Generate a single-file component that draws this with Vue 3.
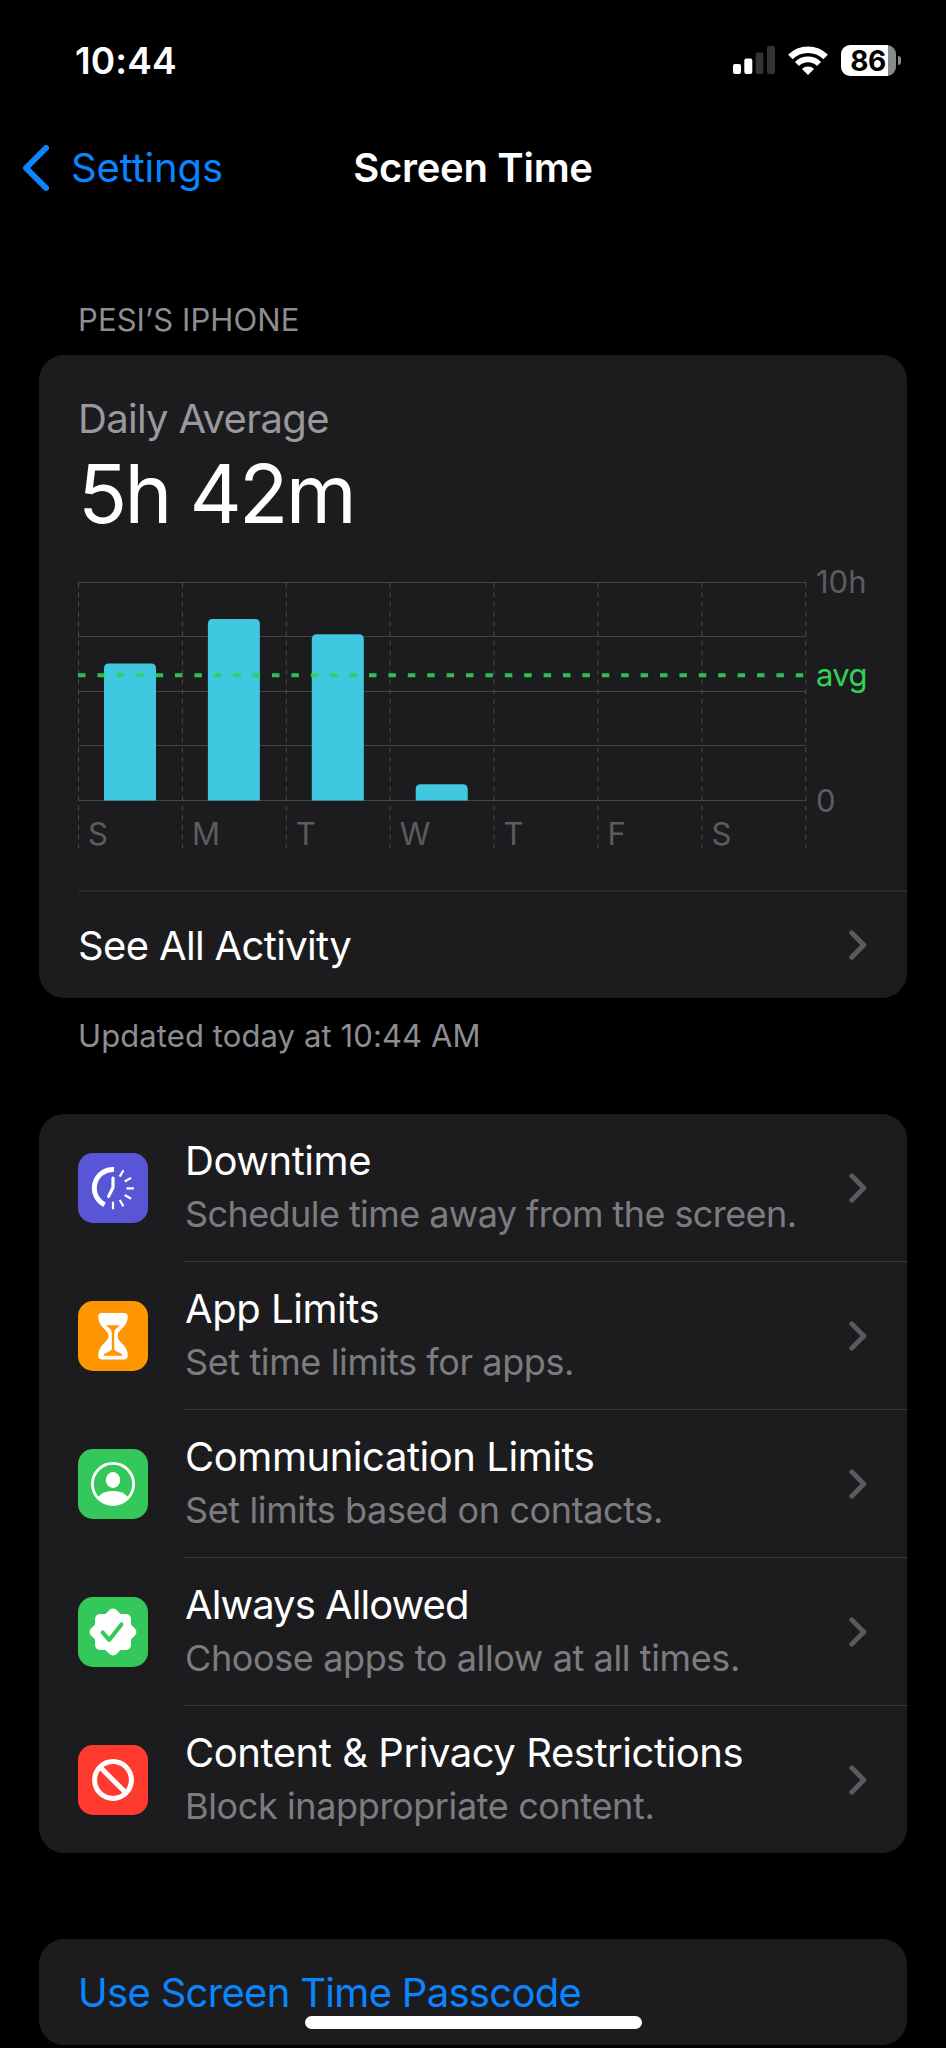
<template>
  <div class="screen">
    <header class="status-bar">
      <span class="clock">10:44</span>
      <div class="status-icons">
        <svg class="signal" viewBox="0 0 42 28">
          <rect x="0" y="18" width="8" height="10" rx="2" fill="#fff" />
          <rect x="11.3" y="12.5" width="8" height="15.5" rx="2" fill="#fff" />
          <rect x="22.7" y="6.5" width="7.6" height="21.5" rx="2" fill="#333" />
          <rect x="34" y="0" width="8" height="28" rx="2" fill="#333" />
        </svg>
        <svg class="wifi" viewBox="0 0 40 29">
          <path
            d="M2.4 11 A25 25 0 0 1 37.6 11"
            fill="none"
            stroke="#fff"
            stroke-width="6.4"
          />
          <path
            d="M9 18 A15.6 15.6 0 0 1 31 18"
            fill="none"
            stroke="#fff"
            stroke-width="5.8"
          />
          <path d="M20 29 L14 23 A8.6 8.6 0 0 1 26 23 Z" fill="#fff" />
        </svg>
        <div class="battery">
          <div class="battery-body">86</div>
          <div class="battery-tip"></div>
        </div>
      </div>
    </header>

    <nav class="nav-bar">
      <a class="back">
        <svg class="back-arrow" viewBox="0 0 26 46">
          <path d="M23 3 L3 23 L23 43" />
        </svg>
        <span>Settings</span>
      </a>
      <h1 class="title">Screen Time</h1>
    </nav>

    <p class="section-label">PESI’S IPHONE</p>

    <section class="card usage">
      <div class="usage-label">Daily Average</div>
      <div class="usage-value">5h 42m</div>

      <svg class="chart" viewBox="0 0 829 300">
        <line
          v-for="y in gridRows"
          :key="y"
          class="grid-line"
          x1="0"
          :x2="chart.width"
          :y1="y"
          :y2="y"
        />
        <line
          v-for="n in 8"
          :key="n"
          class="grid-dash"
          :x1="(n - 1) * columnWidth + 0.5"
          :x2="(n - 1) * columnWidth + 0.5"
          :y1="chart.top"
          y2="287"
        />
        <path
          v-for="(day, index) in recordedDays"
          :key="index"
          class="bar"
          :d="barPath(day.hours, index)"
        />
        <line
          class="avg-line"
          x1="0"
          :x2="chart.width"
          :y1="avgY"
          :y2="avgY"
        />
        <text
          v-for="(day, index) in days"
          :key="index"
          class="axis"
          :x="index * columnWidth + 10"
          y="283.5"
        >
          {{ day.name }}
        </text>
        <text class="axis" x="738" y="32">10h</text>
        <text class="axis avg" x="738" y="125">avg</text>
        <text class="axis" x="738" y="251">0</text>
      </svg>

      <div class="link-row">
        <span>See All Activity</span>
        <svg class="chevron" viewBox="0 0 18 30">
          <path d="M2.7 2.7 L14.8 15 L2.7 27.3" />
        </svg>
      </div>
    </section>

    <p class="footnote">Updated today at 10:44 AM</p>

    <section class="card options">
      <div
        v-for="option in options"
        :key="option.icon"
        :class="['option', `row-${option.icon}`]"
      >
        <svg :class="['option-icon', option.icon]" viewBox="0 0 70 70">
          <g v-if="option.icon === 'downtime'" class="stroked">
            <path d="M36 16.6 A18.6 18.6 0 0 0 26.6 51.8" stroke-width="5" />
            <path
              v-for="n in 6"
              :key="n"
              d="M35 21.8 V14.4"
              stroke-width="2.2"
              :transform="`rotate(${n * 30} 35 35.3)`"
            />
            <path
              d="M35 25 V34.5 L30.6 43.4"
              stroke-width="3.2"
              stroke-linecap="round"
              stroke-linejoin="round"
            />
          </g>
          <g v-else-if="option.icon === 'limits'">
            <path
              fill="#fff"
              d="M24 12 H46 Q49.8 12 49.8 15.6 Q49.8 23 42.6 29 Q39.4 32 39.4 35 Q39.4 38 42.6 41 Q49.8 47 49.8 54.6 Q49.8 58.4 46 58.4 H24 Q20.2 58.4 20.2 54.6 Q20.2 47 27.4 41 Q30.6 38 30.6 35 Q30.6 32 27.4 29 Q20.2 23 20.2 15.6 Q20.2 12 24 12 Z"
            />
            <path
              fill="#ff9500"
              d="M28.2 24.2 H41.8 Q40 26.4 37.8 28 Q36.2 29.4 36.2 32 V48.6 Q37.4 50 41 51.4 Q44 52.4 44.6 54.8 H25.4 Q26 52.4 29 51.4 Q32.6 50 33.8 48.6 V32 Q33.8 29.4 32.2 28 Q30 26.4 28.2 24.2 Z"
            />
          </g>
          <g v-else-if="option.icon === 'contacts'">
            <circle class="stroked" cx="35" cy="35" r="20.6" stroke-width="2.8" />
            <ellipse cx="35" cy="31" rx="7.2" ry="7.9" fill="#fff" />
            <path
              fill="#fff"
              d="M20.4 47.4 Q26 42 35 42 Q44 42 49.6 47.4 Q44 55.8 35 55.8 Q26 55.8 20.4 47.4 Z"
            />
          </g>
          <g v-else-if="option.icon === 'allowed'">
            <rect x="17" y="17" width="36" height="36" rx="5" fill="#fff" />
            <rect
              x="17"
              y="17"
              width="36"
              height="36"
              rx="5"
              fill="#fff"
              transform="rotate(45 35 35)"
            />
            <path
              d="M24.6 35.4 L31.2 43 L43.4 27.4"
              fill="none"
              stroke="#34c759"
              stroke-width="4"
              stroke-linecap="round"
              stroke-linejoin="round"
            />
          </g>
          <g v-else class="stroked" stroke-width="5">
            <circle cx="35" cy="35" r="18.4" />
            <path d="M22 22 L48 48" />
          </g>
        </svg>
        <div class="option-body">
          <div class="option-text">
            <div class="option-title">{{ option.title }}</div>
            <div class="option-detail">{{ option.detail }}</div>
          </div>
          <svg class="chevron" viewBox="0 0 18 30">
            <path d="M2.7 2.7 L14.8 15 L2.7 27.3" />
          </svg>
        </div>
      </div>
    </section>

    <section class="card passcode">Use Screen Time Passcode</section>

    <div class="home-indicator"></div>
  </div>
</template>

<script setup>
import { computed, ref } from "vue";

const days = ref([
  { name: "S", hours: 6.28 },
  { name: "M", hours: 8.33 },
  { name: "T", hours: 7.63 },
  { name: "W", hours: 0.74 },
  { name: "T", hours: 0 },
  { name: "F", hours: 0 },
  { name: "S", hours: 0 },
]);

const options = ref([
  {
    icon: "downtime",
    title: "Downtime",
    detail: "Schedule time away from the screen.",
  },
  {
    icon: "limits",
    title: "App Limits",
    detail: "Set time limits for apps.",
  },
  {
    icon: "contacts",
    title: "Communication Limits",
    detail: "Set limits based on contacts.",
  },
  {
    icon: "allowed",
    title: "Always Allowed",
    detail: "Choose apps to allow at all times.",
  },
  {
    icon: "restrictions",
    title: "Content & Privacy Restrictions",
    detail: "Block inappropriate content.",
  },
]);

const chart = { width: 728, top: 21.5, bottom: 239.5, maxHours: 10 };
const columnWidth = 103.9;
const barWidth = 52;
const average = 5.75;

const gridRows = [21.5, 75.5, 130.5, 184.5, 239.5];
const recordedDays = computed(() => days.value.filter((day) => day.hours > 0));
const avgY = toY(average);

function toY(hours) {
  return chart.bottom - (hours / chart.maxHours) * (chart.bottom - chart.top);
}
// only the top corners of a bar are rounded
function barPath(hours, index) {
  const x = index * columnWidth + 26;
  const y = toY(hours);
  return `M${x} ${chart.bottom} V${y + 5} q0 -5 5 -5 h${barWidth - 10} q5 0 5 5 V${chart.bottom} Z`;
}
</script>

<style>
body {
  background: #000;
}
</style>

<style scoped>
.screen {
  display: flex;
  flex-direction: column;
  box-sizing: border-box;
  height: 2048px;
  padding: 0 39px;
  overflow: hidden;
  position: relative;
  background: #000;
  color: #fff;
  font-family: Inter, "Liberation Sans", sans-serif;
  font-size: 40px;
  letter-spacing: -0.7px;
  white-space: nowrap;
}

.status-bar {
  display: flex;
  justify-content: space-between;
  align-items: center;
  height: 120px;
  padding: 0 5px 0 36px;
}

.clock {
  font-size: 37px;
  font-weight: 600;
  letter-spacing: 0.1px;
}

.status-icons {
  display: flex;
  align-items: center;
  gap: 13px;
}

.signal {
  width: 42px;
  height: 28px;
}

.wifi {
  width: 40px;
  height: 29px;
}

.battery {
  display: flex;
  align-items: center;
  gap: 2px;
}

.battery-body {
  box-sizing: border-box;
  width: 55px;
  height: 31px;
  padding-right: 1px;
  border-radius: 9px;
  background: linear-gradient(to right, #fff 47px, #8a8a8a 47px);
  color: #000;
  font-size: 28px;
  font-weight: 700;
  letter-spacing: -0.5px;
  line-height: 32px;
  text-align: center;
}

.battery-tip {
  width: 3px;
  height: 9px;
  margin-right: 1px;
  border-radius: 0 4px 4px 0;
  background: #8a8a8a;
}

.nav-bar {
  display: grid;
  grid-template-columns: 1fr auto 1fr;
  align-items: center;
  height: 95px;
  margin-left: -16px;
  margin-right: -16px;
}

.back {
  display: flex;
  align-items: center;
  gap: 22px;
  color: #0a84ff;
  letter-spacing: -0.15px;
}

.back-arrow {
  width: 26px;
  height: 46px;
}

.back-arrow path {
  fill: none;
  stroke: #0a84ff;
  stroke-width: 6;
  stroke-linecap: round;
  stroke-linejoin: round;
}

.title {
  margin: 0;
  font-size: 40px;
  font-weight: 600;
  letter-spacing: -0.3px;
}

.section-label,
.footnote {
  margin: 0;
  padding-left: 39px;
  color: #8d8d93;
  font-size: 31px;
  letter-spacing: 0.1px;
  line-height: 38px;
}

.section-label {
  margin-top: 86px;
  margin-bottom: 16px;
}

.footnote {
  margin-top: 19px;
  margin-bottom: 59px;
}

.card {
  border-radius: 25px;
  background: #1c1c1e;
  flex: none;
}

.usage {
  display: flex;
  flex-direction: column;
  box-sizing: border-box;
  height: 643px;
  padding: 39px 0 0 39px;
}

.usage-label {
  color: #98989f;
  line-height: 50px;
}

.usage-value {
  font-size: 81px;
  letter-spacing: -2.8px;
  line-height: 100px;
}

.chart {
  width: 829px;
  height: 300px;
  margin-top: 17px;
}

.grid-line {
  stroke: #434345;
  stroke-width: 1;
}

.grid-dash {
  stroke: #4a4a4c;
  stroke-width: 1;
  stroke-dasharray: 5 4.7;
}

.bar {
  fill: #40c8e0;
}

.avg-line {
  stroke: #30d158;
  stroke-width: 4;
  stroke-dasharray: 7.5 11.9;
  opacity: 0.9;
}

.axis {
  fill: #5c5c60;
  font-size: 31px;
  letter-spacing: 0;
}

.avg {
  fill: #30d158;
  letter-spacing: -0.6px;
}

.link-row {
  display: flex;
  flex: 1;
  justify-content: space-between;
  align-items: center;
  margin-top: 29px;
  padding-right: 40px;
  border-top: 2px solid #29292b;
  letter-spacing: -0.65px;
}

.chevron {
  width: 18px;
  height: 30px;
  flex: none;
}

.chevron path {
  fill: none;
  stroke: #5a5a5e;
  stroke-width: 4.8;
  stroke-linecap: round;
  stroke-linejoin: round;
}

.options {
  padding-left: 39px;
}

.option {
  display: flex;
  align-items: center;
  gap: 36px;
  height: 148px;
}

.option:last-child {
  height: 147px;
}

.option-icon {
  width: 70px;
  height: 70px;
  border-radius: 15px;
  flex: none;
}

.stroked {
  fill: none;
  stroke: #fff;
}

.downtime {
  background: #5856d6;
}

.limits {
  background: #ff9500;
}

.contacts,
.allowed {
  background: #34c759;
}

.restrictions {
  background: #ff3b30;
}

.option-body {
  display: flex;
  flex: 1;
  justify-content: space-between;
  align-items: center;
  box-sizing: border-box;
  height: 100%;
  padding-right: 40px;
  border-bottom: 1px solid #3a3a3c;
}

.option:last-child .option-body {
  border-bottom: none;
}

.option-text {
  padding-left: 1px;
}

.option-title {
  letter-spacing: -0.45px;
  line-height: 54px;
}

.option-detail {
  color: #7c7c80;
  font-size: 36px;
  letter-spacing: -0.38px;
  line-height: 53px;
}

.row-downtime .option-detail {
  letter-spacing: -0.58px;
}

.row-allowed .option-title {
  letter-spacing: -0.95px;
}

.passcode {
  display: flex;
  align-items: center;
  height: 106px;
  margin-top: 86px;
  padding-left: 39px;
  color: #0a84ff;
}

.home-indicator {
  position: absolute;
  bottom: 19px;
  left: 305px;
  width: 337px;
  height: 13px;
  border-radius: 7px;
  background: #fff;
}
</style>
